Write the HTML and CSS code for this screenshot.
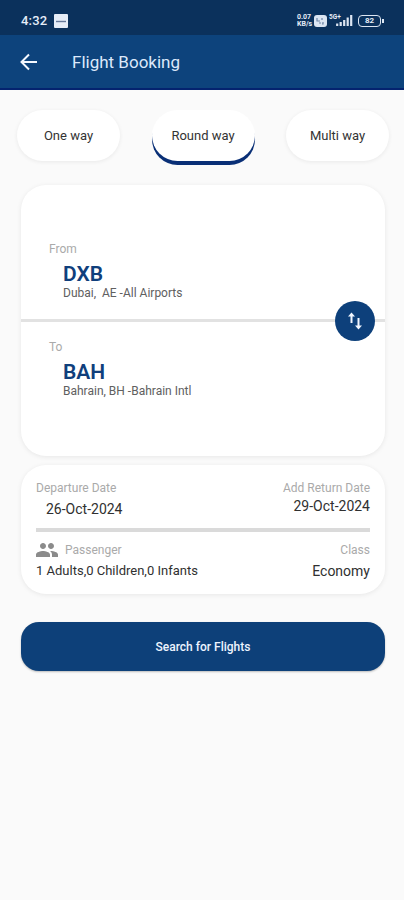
FILE: index.html
```html
<!DOCTYPE html>
<html lang="en">
<head>
<meta charset="utf-8">
<title>Flight Booking</title>
<link rel="stylesheet" href="styles.css">
</head>
<body>
<div class="status">
  <span class="time">4:32</span>
  <svg class="note" width="14" height="14" viewBox="0 0 14 14"><rect width="14" height="14" rx="1" fill="#e6edf8"/><path d="M2 7.5h10" stroke="#66799a" stroke-width="1.4"/></svg>
  <div class="indicators">
    <span class="speed"><span>0.07</span><span>KB/s</span></span>
    <svg width="13" height="12" viewBox="0 0 13 12"><rect width="13" height="12" rx="3" fill="#dce5f2"/><path d="M3 3v3h3M8 3v2M5 8h2M9 7v2h-1" stroke="#6f85a6" stroke-width="1.2" fill="none"/></svg>
    <span class="network">5G+</span>
    <svg class="signal" width="17" height="13" viewBox="0 0 17 13"><path d="M1.2 12V9.5M4.7 12V8M8.2 12V6M11.7 12V3.5M15.2 12V1" stroke="#dce5f2" stroke-width="2.2"/></svg>
    <span class="battery">82</span>
  </div>
</div>
<header class="appbar">
  <svg width="18" height="18" viewBox="0 0 18 18" fill="none" stroke="#f4f8ff" stroke-width="2"><path d="M17 9H2M9 1.500 1.500 9 9 16.500"/></svg>
  <h1><span class="t">Flight Booking</span></h1>
</header>
<main>
  <nav class="tabs">
    <button class="tab">One way</button>
    <button class="tab active">Round way</button>
    <button class="tab">Multi way</button>
  </nav>
  <section class="card route">
    <div class="place from">
      <div class="label">From</div>
      <div class="code">DXB</div>
      <div class="airport dubai">Dubai,&nbsp; AE -All Airports</div>
    </div>
    <div class="divider">
      <button class="swap" aria-label="Swap"><svg width="16" height="20" viewBox="0 0 16 20" fill="none" stroke="#f1f6ff" stroke-width="2"><path d="M4.500 12V3M11.500 7v10"/><path d="M1 5.500 4.500 1.500 8 5.500zM8 14.500l3.500 4 3.500-4z" fill="#f1f6ff" stroke="none"/></svg></button>
    </div>
    <div class="place to">
      <div class="label">To</div>
      <div class="code bah">BAH</div>
      <div class="airport bahrain">Bahrain, BH -Bahrain Intl</div>
    </div>
  </section>
  <section class="card details">
    <div class="row">
      <div class="left"><div class="label departure">Departure Date</div><div class="date">26-Oct-2024</div></div>
      <div class="right"><div class="label return">Add Return Date</div><div class="date">29-Oct-2024</div></div>
    </div>
    <div class="rule"></div>
    <div class="row second">
      <div class="left">
        <div class="label passenger"><svg width="22" height="14" viewBox="1 5 22 14" preserveAspectRatio="none" fill="#8b8b8b"><path d="M16 11c1.660 0 2.990-1.340 2.990-3S17.660 5 16 5s-3 1.340-3 3 1.340 3 3 3zm-8 0c1.660 0 2.990-1.340 2.990-3S9.660 5 8 5 5 6.340 5 8s1.340 3 3 3zm0 2c-2.330 0-7 1.170-7 3.500V19h14v-2.500C15 14.170 10.330 13 8 13zm8 0c-.29 0-.62.020-.97.050 1.160.84 1.970 1.970 1.970 3.450V19h6v-2.500c0-2.330-4.670-3.500-7-3.500z"/></svg><span>Passenger</span></div>
        <div class="people">1 Adults,0 Children,0 Infants</div>
      </div>
      <div class="right"><div class="label class">Class</div><div class="economy">Economy</div></div>
    </div>
  </section>
  <button class="search">Search for Flights</button>
</main>
</body>
</html>
```
FILE: styles.css
```css
* { box-sizing: border-box; }
body {
  margin: 0;
  min-height: 900px;
  background: #fafafa;
  font-family: Roboto, "Liberation Sans", sans-serif;
  color: #303030;
}
button { border: 0; padding: 0; font-family: inherit; }
svg { display: block; flex: none; }
.status {
  height: 35px;
  padding: 6px 21px 0;
  display: flex;
  align-items: center;
  background: #0b315c;
  color: #e6edf8;
}
.time { width: 33px; font-size: 13px; font-weight: 500; letter-spacing: .2px; }
.indicators { margin-left: auto; display: flex; align-items: center; }
.speed {
  display: flex;
  flex-direction: column;
  width: 15px;
  margin-right: 2px;
  font-size: 7px;
  line-height: 6.500px;
  font-weight: 700;
}
.network { width: 12px; margin: -7px -5px 0 2px; font-size: 6.500px; line-height: 7px; font-weight: 700; }
.signal { margin-right: 5px; }
.battery {
  position: relative;
  width: 23px;
  height: 12px;
  margin-right: 2px;
  border: 1.500px solid #dce5f2;
  border-radius: 4px;
  font-size: 8px;
  line-height: 9px;
  font-weight: 700;
  text-align: center;
}
.battery::after {
  content: "";
  position: absolute;
  right: -4px;
  top: 3px;
  width: 2px;
  height: 4px;
  background: #dce5f2;
}
.appbar {
  height: 55px;
  padding-left: 20px;
  display: flex;
  align-items: center;
  background: #0d437c;
  border-bottom: 2px solid #04236f;
  color: #dce9fb;
}
h1 { margin: 0 0 0 34px; font-size: 17px; font-weight: 400; line-height: 24px; }
main { padding: 20px 19px 0 21px; }
.tabs { display: flex; justify-content: space-between; margin: 0 -4px; }
.tab {
  width: 103px;
  height: 51px;
  border-radius: 26px;
  background: #fff;
  font-size: 13px;
  color: #333;
  box-shadow: 0 1px 4px rgba(0, 0, 0, .07);
}
.tab.active { box-shadow: 0 4px 0 #092f76; }
.card { background: #fff; border-radius: 25px; box-shadow: 0 1px 5px rgba(0, 0, 0, .08); }
.route { height: 271px; margin-top: 24px; }
.label { color: #aaa; font-size: 12px; line-height: 16px; }
.place { padding-left: 28px; }
.from { height: 134px; padding-top: 56px; }
.to { padding-top: 17px; }
.code { padding: 4px 0 0 14px; font-size: 21px; line-height: 26px; font-weight: 600; color: #103f7c; }
.airport { padding-left: 14px; font-size: 12px; line-height: 13px; color: #606060; white-space: nowrap; }
.divider { position: relative; height: 3px; background: #e2e2e2; }
.swap {
  position: absolute;
  right: 10px;
  top: -18.500px;
  width: 40px;
  height: 40px;
  display: grid;
  place-items: center;
  border-radius: 50%;
  background: #0d407b;
}
.details { height: 129px; margin-top: 9px; padding: 15px 15px 0; }
.row { display: flex; justify-content: space-between; height: 48px; }
.right { text-align: right; }
.date { font-size: 14px; line-height: 20px; white-space: nowrap; }
.left .date { padding: 3px 0 0 10px; }
.rule { height: 4px; background: #dadada; }
.second { padding-top: 10px; }
.passenger { display: flex; align-items: center; gap: 7px; }
.people { font-size: 13px; line-height: 17px; padding-top: 4px; }
.economy { font-size: 14px; line-height: 18px; padding-top: 4px; }
.search {
  display: block;
  width: 100%;
  height: 49px;
  margin-top: 28px;
  border-radius: 18px;
  background: #0d4079;
  color: #edf4ff;
  font-size: 12px;
  font-weight: 500;
  box-shadow: 0 1px 2px rgba(0, 0, 0, .25);
}
```
